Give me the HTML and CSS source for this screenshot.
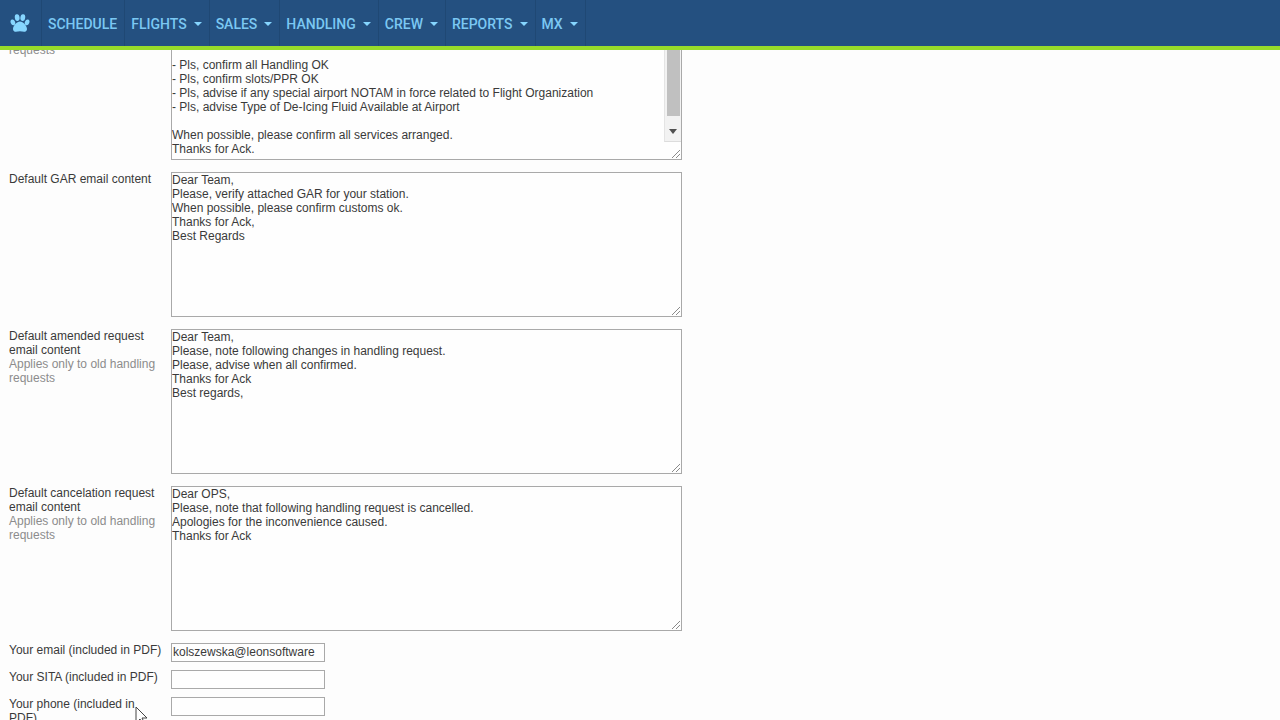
FILE: index.html
```html
<!DOCTYPE html>
<html lang="en">
<head>
<meta charset="utf-8">
<title>Handling settings</title>
<link rel="stylesheet" href="styles.css">
</head>
<body>
<nav class="topbar">
  <a class="nav-item home" href="#" aria-label="Home">
    <svg class="paw" viewBox="0 0 20 20" aria-hidden="true">
      <ellipse cx="7.2" cy="4.6" rx="2.400" ry="3.400" transform="rotate(-8 7.2 4.6)"/>
      <ellipse cx="12.8" cy="4.6" rx="2.400" ry="3.400" transform="rotate(8 12.8 4.6)"/>
      <ellipse cx="2.9" cy="9.400" rx="2.200" ry="3" transform="rotate(-22 2.9 9.4)"/>
      <ellipse cx="17.1" cy="9.400" rx="2.200" ry="3" transform="rotate(22 17.1 9.4)"/>
      <path d="M10 8.600c3 0 7 4.400 7 7.400 0 1.900-1.300 2.800-2.900 2.800-1.500 0-2.700-.5-4.100-.5s-2.600.5-4.100.5c-1.600 0-2.900-.9-2.900-2.800 0-3 4-7.400 7-7.400z"/>
    </svg>
  </a>
  <a class="nav-item" href="#">SCHEDULE</a>
  <a class="nav-item" href="#">FLIGHTS<span class="caret"></span></a>
  <a class="nav-item" href="#">SALES<span class="caret"></span></a>
  <a class="nav-item" href="#">HANDLING<span class="caret"></span></a>
  <a class="nav-item" href="#">CREW<span class="caret"></span></a>
  <a class="nav-item" href="#">REPORTS<span class="caret"></span></a>
  <a class="nav-item" href="#">MX<span class="caret"></span></a>
</nav>
<main class="page">
  <form class="settings">
    <div class="row">
      <label class="label hint continued" for="request">requests</label>
      <div class="area">
        <textarea class="text" id="request">



- Pls, confirm all Handling OK
- Pls, confirm slots/PPR OK
- Pls, advise if any special airport NOTAM in force related to Flight Organization
- Pls, advise Type of De-Icing Fluid Available at Airport

When possible, please confirm all services arranged.
Thanks for Ack.</textarea>
        <div class="scrollbar"><div class="thumb"></div><div class="arrow"></div></div>
        <svg class="grip" viewBox="0 0 10 10" aria-hidden="true"><path d="M1 9L9 1M5 9L9 5"/></svg>
      </div>
    </div>
    <div class="row">
      <label class="label" for="gar">Default GAR email content</label>
      <div class="area">
        <textarea class="text" id="gar">Dear Team,
Please, verify attached GAR for your station.
When possible, please confirm customs ok.
Thanks for Ack,
Best Regards</textarea>
        <svg class="grip" viewBox="0 0 10 10" aria-hidden="true"><path d="M1 9L9 1M5 9L9 5"/></svg>
      </div>
    </div>
    <div class="row">
      <label class="label" for="amended">Default amended request email content <span class="hint">Applies only to old handling requests</span></label>
      <div class="area">
        <textarea class="text" id="amended">Dear Team,
Please, note following changes in handling request.
Please, advise when all confirmed.
Thanks for Ack
Best regards,</textarea>
        <svg class="grip" viewBox="0 0 10 10" aria-hidden="true"><path d="M1 9L9 1M5 9L9 5"/></svg>
      </div>
    </div>
    <div class="row">
      <label class="label" for="cancel">Default cancelation request email content <span class="hint">Applies only to old handling requests</span></label>
      <div class="area">
        <textarea class="text" id="cancel">Dear OPS,
Please, note that following handling request is cancelled.
Apologies for the inconvenience caused.
Thanks for Ack</textarea>
        <svg class="grip" viewBox="0 0 10 10" aria-hidden="true"><path d="M1 9L9 1M5 9L9 5"/></svg>
      </div>
    </div>
    <div class="row short">
      <label class="label" for="email">Your email (included in PDF)</label>
      <input class="field" id="email" type="text" value="kolszewska@leonsoftware">
    </div>
    <div class="row short">
      <label class="label" for="sita">Your SITA (included in PDF)</label>
      <input class="field" id="sita" type="text">
    </div>
    <div class="row short">
      <label class="label" for="phone">Your phone (included in PDF)</label>
      <input class="field" id="phone" type="text">
    </div>
  </form>
</main>
<svg class="pointer" viewBox="0 0 14 20" aria-hidden="true"><path d="M1 1v16l4-4 3 6 2-1-3-6h5z"/></svg>
</body>
</html>
```

FILE: styles.css
```css
* { box-sizing: border-box; }

body {
  margin: 0;
  height: 100vh;
  overflow: hidden;
  display: flex;
  flex-direction: column;
  background: #fdfdfd;
  color: #3a3a3a;
  font: 12px/14px "Liberation Sans", Arial, sans-serif;
}

.topbar {
  flex: none;
  display: flex;
  height: 50px;
  background: #245080;
  border-bottom: 4px solid #97db2a;
}

.nav-item {
  display: flex;
  align-items: center;
  gap: 7px;
  padding: 1px 7px 0 6px;
  border-right: 1px solid #1f4874;
  color: #7bc8f3;
  font: 500 14px/20px Roboto, sans-serif;
  text-decoration: none;
}

.home { padding: 0 11px 0 10px; }

.paw { width: 20px; height: 20px; fill: #86d6ff; }

.caret {
  border: 4px solid transparent;
  border-top-color: #86d6ff;
  border-bottom: 0;
}

.page {
  flex: 1;
  min-height: 0;
  overflow: hidden;
}

/* The form is shown part-way down its scroll range. */
.settings {
  display: flex;
  flex-direction: column;
  gap: 12px;
  margin-top: -35px;
  padding-left: 9px;
}

.row {
  display: grid;
  grid-template-columns: 154px minmax(0, 511px);
  column-gap: 8px;
  align-items: start;
}

.short + .short { margin-top: -4px; }

.hint { display: block; color: #8c8c8c; }

.continued { padding-top: 28px; }

.area { position: relative; }

.text,
.field {
  display: block;
  border: 1px solid #a9a9a9;
  border-radius: 0;
  background: #fefefe;
  color: #3a3a3a;
  font: inherit;
  outline: 0;
}

.text {
  width: 100%;
  height: 145px;
  padding: 0;
  resize: none;
  overflow: hidden;
}

.field { width: 154px; height: 19px; padding: 0 2px 2px 1px; }

.scrollbar {
  position: absolute;
  top: 1px;
  right: 1px;
  bottom: 18px;
  width: 17px;
  display: flex;
  flex-direction: column;
  justify-content: space-between;
  align-items: center;
  background: #f2f2f2;
  border-left: 1px solid #e4e4e4;
  border-bottom: 1px solid #dcdcdc;
}

.thumb { width: 13px; height: 100px; background: #c0c0c0; }

.arrow {
  margin-bottom: 7px;
  border: 4px solid transparent;
  border-top: 5px solid #505050;
  border-bottom: 0;
}

.grip {
  position: absolute;
  right: 1px;
  bottom: 1px;
  width: 10px;
  height: 10px;
  fill: none;
  stroke: #8a8a8a;
}

.pointer {
  position: fixed;
  left: 135px;
  top: 706px;
  width: 14px;
  height: 20px;
  fill: #fff;
  stroke: #444;
}
```
